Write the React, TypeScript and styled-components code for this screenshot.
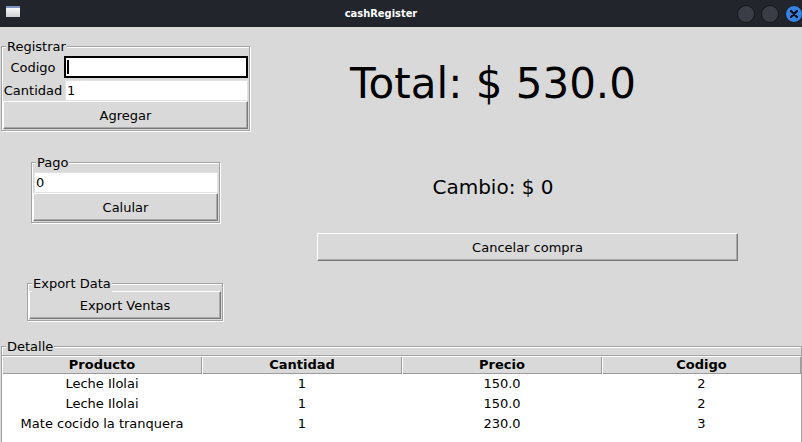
import React from 'react';
import styled, { createGlobalStyle } from 'styled-components';

const GlobalStyle = createGlobalStyle`
html, body {
  margin: 0;
  padding: 0;
  background: #d9d9d9;
}
body {
  font-family: "DejaVu Sans", "Liberation Sans", sans-serif;
}
`;

const Window = styled.div`
width: 802px;
height: 442px;
overflow: hidden;
background: #d9d9d9;
color: #000;
font-size: 13px;
display: flex;
flex-direction: column;
`;

const TitleBar = styled.div`
height: 27px;
flex: none;
display: flex;
align-items: center;
background: #22252c;
padding-left: 6px;
overflow: hidden;
`;

const WindowIcon = styled.div`
width: 14px;
height: 11px;
align-self: flex-start;
margin-top: 6px;
margin-right: 5px;
box-sizing: border-box;
border-top: 2px solid #7d92c0;
background: linear-gradient(#f7f7f7, #cfd0d2);
`;

const Title = styled.div`
flex: 1;
text-align: center;
color: #fff;
font-family: "DejaVu Sans Condensed", "DejaVu Sans", sans-serif;
font-stretch: condensed;
font-weight: bold;
font-size: 11px;
`;

const Controls = styled.div`
display: flex;
gap: 6px;
margin-right: -1px;
`;

const CircleButton = styled.div<{ $close?: boolean }>`
width: 18px;
height: 18px;
box-sizing: border-box;
border-radius: 50%;
border: 1px solid #16181d;
background: ${p => (p.$close ? '#3584e4' : '#3a3d46')};
display: flex;
align-items: center;
justify-content: center;
`;

const Top = styled.div`
display: flex;
`;

const LeftColumn = styled.div`
width: 250px;
display: flex;
flex-direction: column;
align-items: flex-start;
`;

const RightColumn = styled.div`
width: 486px;
display: flex;
flex-direction: column;
align-items: center;
`;

const GroupBox = styled.div<{ $mt: number; $ml: number; $w: number; $pt: number; $px?: number }>`
position: relative;
box-sizing: border-box;
margin: ${p => p.$mt}px 0 0 ${p => p.$ml}px;
width: ${p => p.$w}px;
padding: ${p => p.$pt}px ${p => p.$px ?? 1}px 1px ${p => p.$px ?? 1}px;
border: 1px solid #a3a3a3;
box-shadow: inset 1px 1px 0 #fff, 1px 1px 0 #fff;
`;

const GroupTitle = styled.span`
position: absolute;
top: -8px;
left: 4px;
padding: 0 1px;
line-height: 16px;
background: #d9d9d9;
`;

const FormGrid = styled.div`
display: grid;
grid-template-columns: 61px 1fr;
grid-template-rows: 24px 22px 28px;
`;

const FieldLabel = styled.div`
display: flex;
align-items: center;
justify-content: center;
white-space: nowrap;
padding-right: 1px;
`;

const Entry = styled.div<{ $focused?: boolean; $h?: number }>`
box-sizing: border-box;
height: ${p => p.$h ?? 21}px;
margin: ${p => (p.$focused ? '1px 0 1px 0' : '1px 0 0 1px')};
border: ${p => (p.$focused ? '2px solid #000' : '1px solid #e2e2e2')};
background: #fff;
display: flex;
align-items: center;
padding-left: 1px;
line-height: 16px;
`;

const Caret = styled.span`
display: inline-block;
width: 2px;
height: 14px;
background: #000;
`;

const TkButton = styled.button`
box-sizing: border-box;
display: block;
width: 100%;
height: 28px;
padding: 0;
margin: 0;
background: #d9d9d9;
color: #000;
font-family: "DejaVu Sans", "Liberation Sans", sans-serif;
font-size: 13px;
border: 1px solid;
border-color: #fff #7a7a7a #7a7a7a #fff;
box-shadow: inset -1px -1px 0 #a9a9a9;
grid-column: 1 / -1;
`;

const CancelButton = styled(TkButton)`
align-self: flex-start;
width: 421px;
margin: 34px 0 0 67px;
`;

const TotalLabel = styled.div`
margin-top: 32px;
font-size: 42px;
line-height: 49px;
white-space: nowrap;
`;

const ChangeLabel = styled.div`
margin-top: 68px;
font-size: 20px;
line-height: 23px;
white-space: nowrap;
`;

const Tree = styled.div`
border-top: 1px solid #a3a3a3;
background: #fff;
height: 120px;
`;

const TreeRow = styled.div<{ $head?: boolean }>`
display: grid;
grid-template-columns: 200px 200px 200px 1fr;
height: ${p => (p.$head ? 18 : 20)}px;
line-height: ${p => (p.$head ? 18 : 20)}px;
font-weight: ${p => (p.$head ? 'bold' : 'normal')};
`;

const HeadCell = styled.div`
text-align: center;
background: #d9d9d9;
box-shadow: inset 1px 1px 0 #fff, inset -1px -1px 0 #9c9c9c;
`;

const Cell = styled.div`
text-align: center;
white-space: nowrap;
`;

const rows = [
  ['Leche Ilolai', '1', '150.0', '2'],
  ['Leche Ilolai', '1', '150.0', '2'],
  ['Mate cocido la tranquera', '1', '230.0', '3'],
];

const App: React.FC = () => {
  return (
    <Window>
      <GlobalStyle />
      <TitleBar>
        <WindowIcon />
        <Title>cashRegister</Title>
        <Controls>
          <CircleButton />
          <CircleButton />
          <CircleButton $close>
            <svg width="10" height="10" viewBox="0 0 10 10">
              <path d="M2 2 L8 8 M8 2 L2 8" stroke="#0b0d12" strokeWidth="2.2" strokeLinecap="round" />
            </svg>
          </CircleButton>
        </Controls>
      </TitleBar>

      <Top>
        <LeftColumn>
          <GroupBox $mt={19} $ml={1} $w={249} $pt={8}>
            <GroupTitle>Registrar</GroupTitle>
            <FormGrid>
              <FieldLabel>Codigo</FieldLabel>
              <Entry $focused $h={22}>
                <Caret />
              </Entry>
              <FieldLabel>Cantidad</FieldLabel>
              <Entry>1</Entry>
              <TkButton>Agregar</TkButton>
            </FormGrid>
          </GroupBox>

          <GroupBox $mt={31} $ml={31} $w={189} $pt={8}>
            <GroupTitle>Pago</GroupTitle>
            <Entry>0</Entry>
            <TkButton>Calular</TkButton>
          </GroupBox>

          <GroupBox $mt={60} $ml={27} $w={196} $pt={7}>
            <GroupTitle>Export Data</GroupTitle>
            <TkButton>Export Ventas</TkButton>
          </GroupBox>
        </LeftColumn>

        <RightColumn>
          <TotalLabel>Total: $ 530.0</TotalLabel>
          <ChangeLabel>Cambio: $ 0</ChangeLabel>
          <CancelButton>Cancelar compra</CancelButton>
        </RightColumn>
      </Top>

      <GroupBox $mt={25} $ml={1} $w={801} $pt={8} $px={0}>
        <GroupTitle>Detalle</GroupTitle>
        <Tree>
          <TreeRow $head>
            <HeadCell>Producto</HeadCell>
            <HeadCell>Cantidad</HeadCell>
            <HeadCell>Precio</HeadCell>
            <HeadCell>Codigo</HeadCell>
          </TreeRow>
          {rows.map((r, i) => (
            <TreeRow key={i}>
              {r.map((c, j) => (
                <Cell key={j}>{c}</Cell>
              ))}
            </TreeRow>
          ))}
        </Tree>
      </GroupBox>
    </Window>
  );
};

export default App;
